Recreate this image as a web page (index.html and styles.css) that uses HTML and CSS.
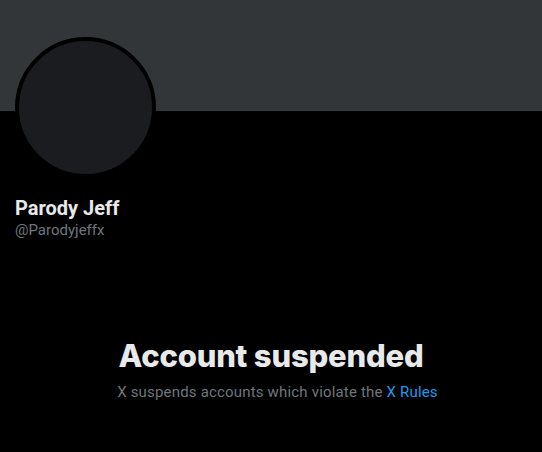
FILE: index.html
```html
<!DOCTYPE html>
<html>
<head>
<meta charset="utf-8">
<link rel="stylesheet" href="styles.css">
</head>
<body>
<div class="page">
  <div class="banner"></div>
  <div class="profile">
    <div class="avatar-row">
      <div class="avatar"></div>
    </div>
    <div class="names">
      <div class="name">Parody Jeff</div>
      <div class="handle">@Parodyjeffx</div>
    </div>
  </div>
  <div class="suspended">
    <div class="title">Account suspended</div>
    <div class="sub">X suspends accounts which violate the <a class="link">X Rules</a></div>
  </div>
</div>
</body>
</html>
```
FILE: styles.css
```css
html, body {
  margin: 0;
  padding: 0;
  background: #000;
}
body {
  font-family: Roboto, "Liberation Sans", sans-serif;
  color: #e7e9ea;
}
.page {
  width: 542px;
  height: 452px;
  overflow: hidden;
}
.banner {
  height: 111px;
  background: #333639;
}
.profile {
  padding: 0 15px;
}
.avatar-row {
  margin-top: -74px;
  height: 141px;
}
.avatar {
  width: 133px;
  height: 133px;
  border: 4px solid #000;
  border-radius: 50%;
  background: #1a1c20;
}
.names {
  margin-top: 18px;
}
.name {
  font-size: 20px;
  font-weight: 700;
  line-height: 24px;
  color: #e7e9ea;
}
.handle {
  font-size: 15px;
  line-height: 20px;
  color: #71767b;
}
.suspended {
  margin-top: 98px;
  display: flex;
  flex-direction: column;
  align-items: center;
}
.title {
  font-family: Inter, Roboto, sans-serif;
  font-size: 31px;
  font-weight: 800;
  line-height: 36px;
  letter-spacing: -0.2px;
  color: #e7e9ea;
}
.sub {
  margin-top: 8px;
  padding-left: 13px;
  font-size: 15px;
  line-height: 20px;
  letter-spacing: 0.18px;
  color: #71767b;
}
.link {
  color: #1d9bf0;
  text-decoration: none;
}
```
